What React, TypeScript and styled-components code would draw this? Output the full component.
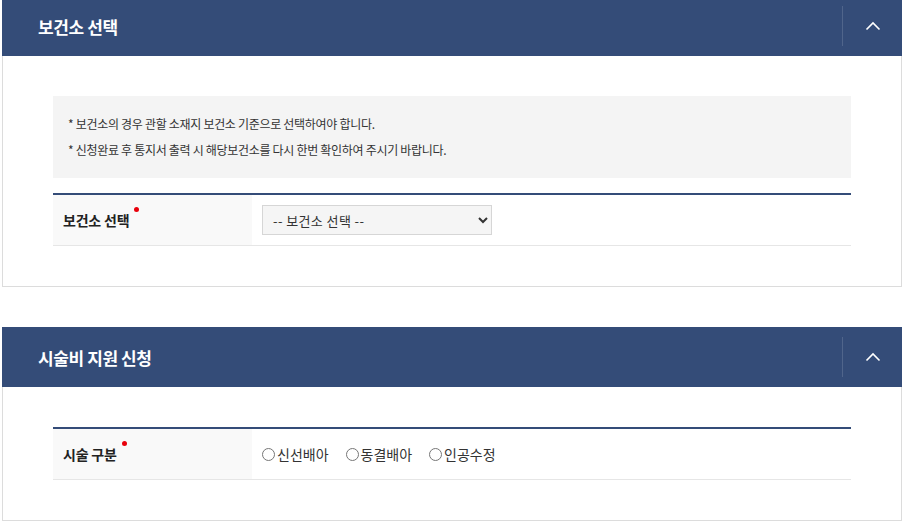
import React, { useState } from 'react';
import styled, { createGlobalStyle } from 'styled-components';

const GlobalStyle = createGlobalStyle`
  html, body {
    margin: 0;
    padding: 0;
    background: #fff;
  }
  body {
    font-family: 'Noto Sans CJK KR', 'Noto Sans', sans-serif;
    color: #222;
  }
  * {
    box-sizing: border-box;
  }
`;

const NAVY = '#344c78';

const Page = styled.div`
  width: 900px;
  margin: -4px 0 0 2px;
  display: flex;
  flex-direction: column;
  gap: 40px;
`;

const Section = styled.section`
  display: flex;
  flex-direction: column;
`;

const SectionHeader = styled.header`
  height: 60px;
  background: ${NAVY};
  display: flex;
  align-items: center;
  justify-content: space-between;
  padding-left: 36px;
`;

const SectionTitle = styled.h2`
  margin: 0;
  color: #fff;
  font-size: 17px;
  font-weight: 700;
  letter-spacing: -0.4px;
`;

const ToggleButton = styled.button`
  width: 60px;
  height: 40px;
  border: 0;
  border-left: 1px solid rgba(255, 255, 255, 0.14);
  background: transparent;
  display: flex;
  align-items: center;
  justify-content: center;
  padding: 0;
  cursor: pointer;
`;

const SectionBody = styled.div`
  border: 1px solid #dcdcdc;
  border-top: 0;
  padding: 40px 50px;
`;

const InfoBox = styled.div`
  background: #f4f4f4;
  padding: 15px 15px;
  margin-bottom: 15px;
`;

const InfoLine = styled.p`
  margin: 0;
  font-size: 12px;
  line-height: 26px;
  letter-spacing: -0.3px;
  color: #333;
`;

const FormTable = styled.div`
  border-top: 2px solid ${NAVY};
`;

const FormRow = styled.div`
  display: grid;
  grid-template-columns: 199px 1fr;
  border-bottom: 1px solid #e6e6e6;
  min-height: 51px;
`;

const FormLabel = styled.div`
  background: #f9f9f9;
  padding: 0 10px;
  display: flex;
  align-items: center;
  font-size: 14px;
  font-weight: 700;
  letter-spacing: -0.2px;
  color: #222;
`;

const Required = styled.span`
  position: relative;
  &::after {
    content: '';
    position: absolute;
    right: -10px;
    top: -3px;
    width: 5px;
    height: 5px;
    border-radius: 50%;
    background: #e8000b;
  }
`;

const FormField = styled.div`
  padding: 0 10px;
  display: flex;
  align-items: center;
`;

const Select = styled.select`
  width: 230px;
  height: 30px;
  padding: 0 6px;
  border: 1px solid #d6d6d6;
  border-radius: 0;
  background-color: #f5f5f5;
  font-family: 'Noto Sans CJK KR', sans-serif;
  font-size: 13px;
  letter-spacing: 0.4px;
  color: #333;
`;

const RadioGroup = styled.div`
  display: flex;
  align-items: center;
  gap: 17px;
`;

const RadioLabel = styled.label`
  display: flex;
  align-items: center;
  gap: 2px;
  font-size: 14px;
  letter-spacing: 0;
  color: #333;
  cursor: pointer;

  input {
    margin: 0;
    width: 13px;
    height: 13px;
  }
`;

const Chevron = () => (
  <svg width="16" height="10" viewBox="0 0 16 10" fill="none">
    <path d="M1.5 8.5 L8 2 L14.5 8.5" stroke="#fff" strokeWidth="1.6" />
  </svg>
);

const procedures = ['신선배아', '동결배아', '인공수정'];

const App = () => {
  const [open1, setOpen1] = useState(true);
  const [open2, setOpen2] = useState(true);
  const [center, setCenter] = useState('');
  const [procedure, setProcedure] = useState('');

  return (
    <>
      <GlobalStyle />
      <Page>
        <Section>
          <SectionHeader>
            <SectionTitle>보건소 선택</SectionTitle>
            <ToggleButton aria-label="접기" onClick={() => setOpen1(!open1)}>
              <Chevron />
            </ToggleButton>
          </SectionHeader>
          {open1 && (
            <SectionBody>
              <InfoBox>
                <InfoLine>* 보건소의 경우 관할 소재지 보건소 기준으로 선택하여야 합니다.</InfoLine>
                <InfoLine>* 신청완료 후 통지서 출력 시 해당보건소를 다시 한번 확인하여 주시기 바랍니다.</InfoLine>
              </InfoBox>
              <FormTable>
                <FormRow>
                  <FormLabel>
                    <Required>보건소 선택</Required>
                  </FormLabel>
                  <FormField>
                    <Select value={center} onChange={(e) => setCenter(e.target.value)}>
                      <option value="">-- 보건소 선택 --</option>
                    </Select>
                  </FormField>
                </FormRow>
              </FormTable>
            </SectionBody>
          )}
        </Section>

        <Section>
          <SectionHeader>
            <SectionTitle>시술비 지원 신청</SectionTitle>
            <ToggleButton aria-label="접기" onClick={() => setOpen2(!open2)}>
              <Chevron />
            </ToggleButton>
          </SectionHeader>
          {open2 && (
            <SectionBody>
              <FormTable>
                <FormRow>
                  <FormLabel>
                    <Required>시술 구분</Required>
                  </FormLabel>
                  <FormField>
                    <RadioGroup>
                      {procedures.map((p) => (
                        <RadioLabel key={p}>
                          <input
                            type="radio"
                            name="procedure"
                            checked={procedure === p}
                            onChange={() => setProcedure(p)}
                          />
                          {p}
                        </RadioLabel>
                      ))}
                    </RadioGroup>
                  </FormField>
                </FormRow>
              </FormTable>
            </SectionBody>
          )}
        </Section>
      </Page>
    </>
  );
};

export default App;
